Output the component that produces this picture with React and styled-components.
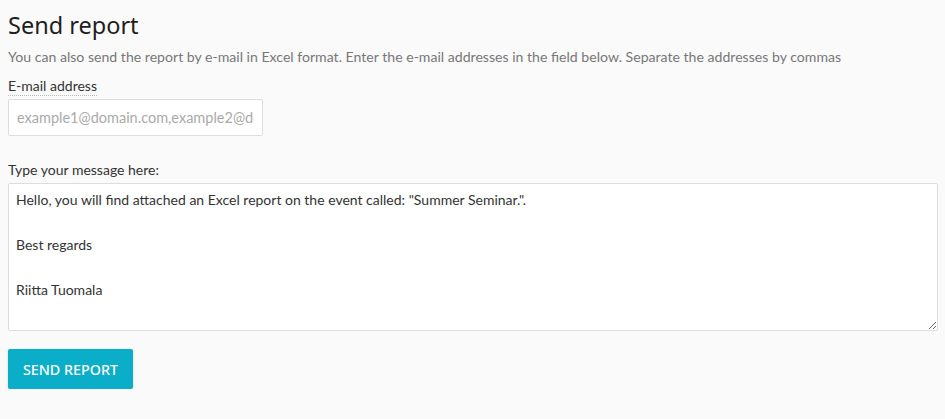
import React from "react";
import styled, { createGlobalStyle } from "styled-components";

const GlobalStyle = createGlobalStyle`
	body {
		margin: 0;
		background: #fafafa;
		font-family: "Lato", "Open Sans", sans-serif;
		color: #333;
	}
`;

const Page = styled.div`
	padding: 10px 8px 0 8px;
	display: flex;
	flex-direction: column;
`;

const Title = styled.h2`
	margin: 0;
	font-family: "Noto Sans", "Open Sans", sans-serif;
	font-weight: 400;
	font-size: 23.5px;
	line-height: 30px;
	color: #1e1e1e;
`;

const Intro = styled.p`
	margin: 7px 0 0 0;
	font-size: 14.1px;
	line-height: 20px;
	color: #777;
`;

const Label = styled.label`
	display: block;
	margin: ${(p) => p.$top || 0}px 0 4px 0;
	font-size: 14px;
	line-height: 18px;
	color: #333;
	span {
		padding-bottom: 1px;
		border-bottom: 1px dotted #bbb;
	}
`;

const EmailInput = styled.input`
	box-sizing: border-box;
	width: 255px;
	height: 37px;
	padding: 0 8px;
	border: 1px solid #ddd;
	border-radius: 2px;
	background: #fff;
	font-family: inherit;
	font-size: 14.5px;
	color: #333;
	&::placeholder {
		color: #aaa;
	}
`;

const Message = styled.textarea`
	box-sizing: border-box;
	width: 930px;
	height: 148px;
	padding: 5px 7px;
	border: 1px solid #ddd;
	border-radius: 2px;
	background: #fff;
	font-family: inherit;
	font-size: 14px;
	line-height: 22.5px;
	color: #333;
`;

const SendButton = styled.button`
	align-self: flex-start;
	margin-top: 18px;
	width: 125px;
	height: 40px;
	border: none;
	border-radius: 2px;
	background: #0aaec8;
	color: #fff;
	font-family: "Noto Sans", sans-serif;
	font-weight: 500;
	font-size: 14.3px;
	text-transform: uppercase;
	box-shadow: 0 1px 3px rgba(0, 0, 0, 0.15);
	cursor: pointer;
`;

const defaultMessage = `Hello, you will find attached an Excel report on the event called: "Summer Seminar.".

Best regards

Riitta Tuomala`;

export default function App() {
	return (
		<>
			<GlobalStyle />
			<Page>
				<Title>Send report</Title>
				<Intro>
					You can also send the report by e-mail in Excel format. Enter the e-mail
					addresses in the field below. Separate the addresses by commas
				</Intro>
				<Label $top={10}>
					<span>E-mail address</span>
				</Label>
				<EmailInput placeholder="example1@domain.com,example2@domain.com" />
				<Label $top={25}>Type your message here:</Label>
				<Message defaultValue={defaultMessage} />
				<SendButton>Send report</SendButton>
			</Page>
		</>
	);
}
